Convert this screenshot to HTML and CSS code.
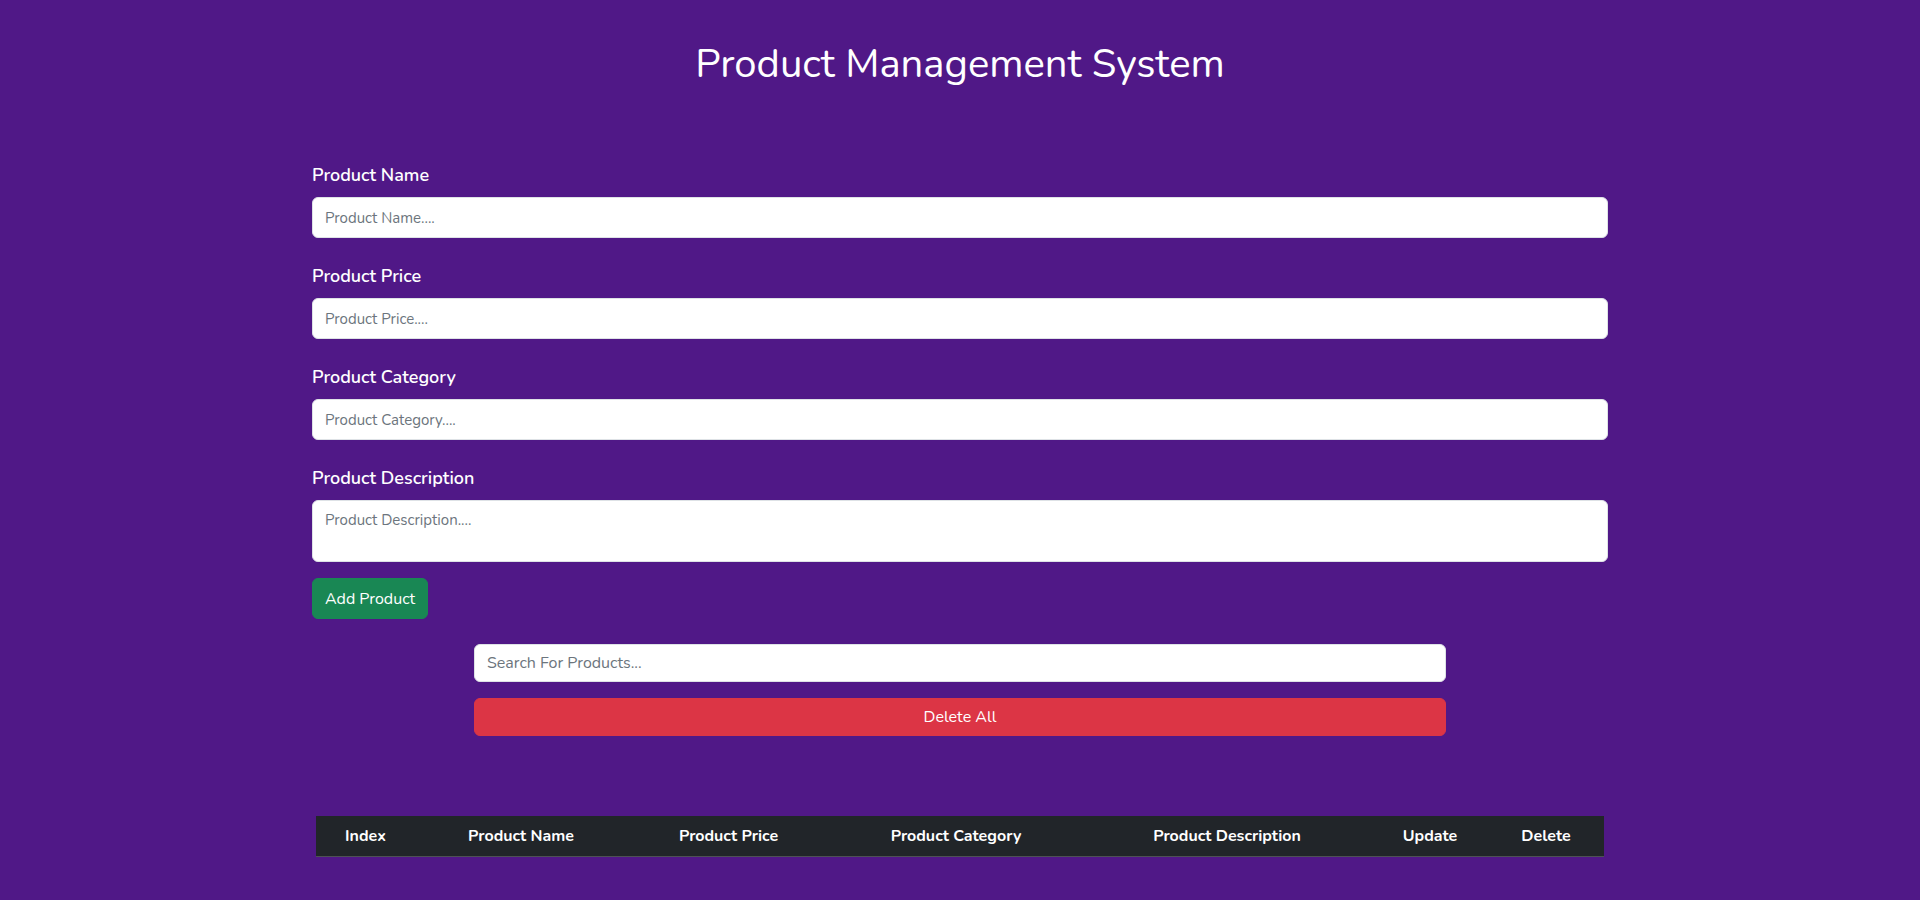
FILE: index.html
```html
<!DOCTYPE html>
<html lang="en">
<head>
<meta charset="utf-8">
<title>Product Management System</title>
<link rel="stylesheet" href="styles.css">
</head>
<body>
<div class="container">
  <h1 class="title">Product Management System</h1>

  <div class="field">
    <label class="label" for="pname">Product Name</label>
    <input class="input" id="pname" type="text" placeholder="Product Name....">
  </div>
  <div class="field">
    <label class="label" for="pprice">Product Price</label>
    <input class="input" id="pprice" type="text" placeholder="Product Price....">
  </div>
  <div class="field">
    <label class="label" for="pcat">Product Category</label>
    <input class="input" id="pcat" type="text" placeholder="Product Category....">
  </div>
  <div class="field field-last">
    <label class="label" for="pdesc">Product Description</label>
    <textarea class="input textarea" id="pdesc" placeholder="Product Description...."></textarea>
  </div>
  <button class="btn btn-add" type="button">Add Product</button>

  <div class="tools">
    <input class="search" type="text" placeholder="Search For Products...">
    <button class="btn btn-delete" type="button">Delete All</button>
  </div>

  <table class="table">
    <thead>
      <tr>
        <th class="c-index">Index</th>
        <th class="c-name">Product Name</th>
        <th class="c-price">Product Price</th>
        <th class="c-cat">Product Category</th>
        <th class="c-desc">Product Description</th>
        <th class="c-upd">Update</th>
        <th class="c-del">Delete</th>
      </tr>
    </thead>
    <tbody></tbody>
  </table>
</div>
</body>
</html>
```

FILE: styles.css
```css
* { box-sizing: border-box; }

body {
  margin: 0;
  background: #501887;
  font-family: "Nunito", "Open Sans", sans-serif;
  color: #fff;
}

.container {
  width: 1320px;
  margin: 0 auto;
  padding: 0 12px;
}

.title {
  margin: 40px 0 74px;
  font-size: 40px;
  line-height: 48px;
  font-weight: 400;
  text-align: center;
  color: #fff;
}

.field {
  margin-bottom: 25px;
}

.field-last {
  margin-bottom: 16px;
}

.label {
  display: block;
  font-size: 18px;
  line-height: 27px;
  font-weight: 600;
  margin-bottom: 8px;
  color: #fff;
}

.input,
.search {
  display: block;
  width: 100%;
  height: 41px;
  padding: 7px 12px;
  border: 1px solid #dee2e6;
  border-radius: 6px;
  background: #fff;
  font-family: inherit;
  font-size: 15px;
  line-height: 24px;
  color: #212529;
  outline: none;
}

.input::placeholder,
.search::placeholder {
  color: #6c757d;
}

.textarea {
  height: 62px;
  resize: none;
}

.btn {
  display: block;
  border: 1px solid transparent;
  border-radius: 6px;
  font-family: inherit;
  font-size: 16px;
  line-height: 24px;
  color: #fff;
  cursor: pointer;
}

.btn-add {
  height: 41px;
  padding: 7px 12px;
  background: #198754;
  border-color: #198754;
}

.tools {
  width: 972px;
  margin: 25px auto 0;
}

.search {
  height: 38px;
  padding: 6px 12px;
  font-size: 16px;
}

.btn-delete {
  width: 100%;
  height: 38px;
  margin-top: 16px;
  background: #dc3545;
  border-color: #dc3545;
}

.table {
  width: calc(100% - 8px);
  margin: 80px 4px 16px;
  border-collapse: collapse;
  table-layout: fixed;
}

.table th {
  height: 40px;
  padding: 8px;
  background: #212529;
  border-bottom: 1px solid #4d5154;
  font-size: 16px;
  line-height: 24px;
  font-weight: 700;
  text-align: center;
  color: #fff;
}

.c-index { width: 99px; }
.c-name { width: 212px; }
.c-price { width: 203px; }
.c-cat { width: 252px; }
.c-desc { width: 290px; }
.c-upd { width: 116px; }
.c-del { width: 116px; }
```
